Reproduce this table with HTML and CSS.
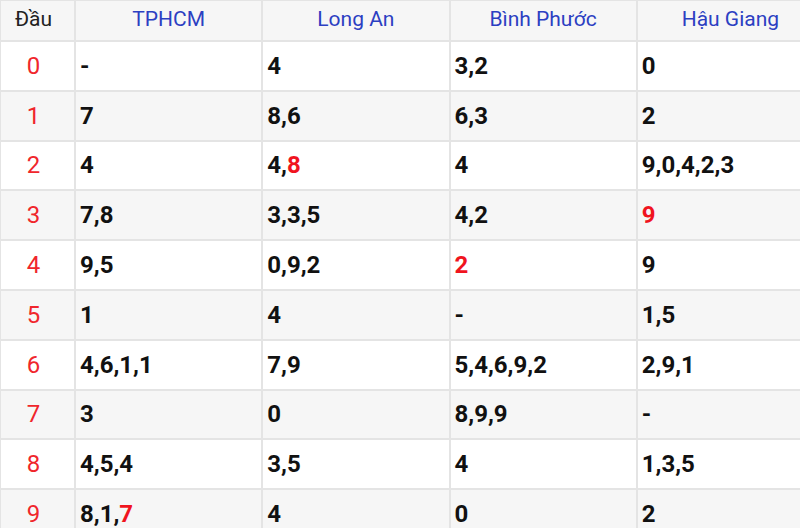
FILE: index.html
```html
<!DOCTYPE html>
<html lang="vi">
<head>
<meta charset="utf-8">
<link rel="stylesheet" href="styles.css">
</head>
<body>
<table class="loto">
  <thead>
    <tr><th class="dau">Đầu</th><th>TPHCM</th><th>Long An</th><th>Bình Phước</th><th>Hậu Giang</th></tr>
  </thead>
  <tbody>
    <tr><td class="dau">0</td><td>-</td><td>4</td><td>3,2</td><td>0</td></tr>
    <tr><td class="dau">1</td><td>7</td><td>8,6</td><td>6,3</td><td>2</td></tr>
    <tr><td class="dau">2</td><td>4</td><td>4,<span class="hl">8</span></td><td>4</td><td>9,0,4,2,3</td></tr>
    <tr><td class="dau">3</td><td>7,8</td><td>3,3,5</td><td>4,2</td><td><span class="hl">9</span></td></tr>
    <tr><td class="dau">4</td><td>9,5</td><td>0,9,2</td><td><span class="hl">2</span></td><td>9</td></tr>
    <tr><td class="dau">5</td><td>1</td><td>4</td><td>-</td><td>1,5</td></tr>
    <tr><td class="dau">6</td><td>4,6,1,1</td><td>7,9</td><td>5,4,6,9,2</td><td>2,9,1</td></tr>
    <tr><td class="dau">7</td><td>3</td><td>0</td><td>8,9,9</td><td>-</td></tr>
    <tr><td class="dau">8</td><td>4,5,4</td><td>3,5</td><td>4</td><td>1,3,5</td></tr>
    <tr><td class="dau">9</td><td>8,1,<span class="hl">7</span></td><td>4</td><td>0</td><td>2</td></tr>
  </tbody>
</table>
</body>
</html>
```
FILE: styles.css
```css
html, body {
  margin: 0;
  padding: 0;
  background: #fff;
  overflow: hidden;
}
body {
  width: 800px;
  height: 528px;
  font-family: Roboto, "Liberation Sans", sans-serif;
}
.loto {
  width: 826px;
  border-collapse: collapse;
  table-layout: fixed;
  margin-left: -1px;
  margin-top: -1px;
}
.loto th, .loto td {
  border: 2px solid #e4e4e4;
  padding: 0 0 0 4px;
  font-size: 24px;
  color: #111;
}
.loto th {
  height: 36px;
  font-size: 21px;
  font-weight: normal;
  color: #2c3fc2;
  text-align: center;
  background: #f6f6f6;
  padding: 0 0 3px 0;
}
.loto th.dau {
  width: 65px;
  color: #222;
  padding-right: 8px;
}
.loto td {
  height: 47.8px;
  font-weight: bold;
}
.loto td.dau {
  font-weight: normal;
  color: #f0262c;
  text-align: center;
  padding: 0 8px 0 0;
}
.loto tbody tr:nth-child(even) td {
  background: #f6f6f6;
}
.hl {
  color: #f0141e;
}
```
